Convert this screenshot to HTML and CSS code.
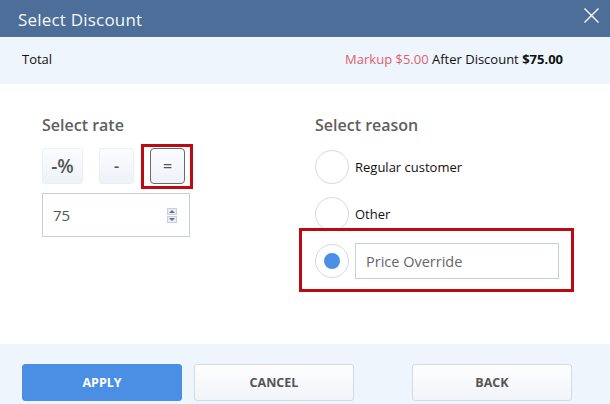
FILE: index.html
```html
<!DOCTYPE html>
<html lang="en">
  <head>
    <meta charset="UTF-8" />
    <meta name="viewport" content="width=device-width, initial-scale=1.0" />
    <title>Select Discount</title>
    <link rel="stylesheet" href="styles.css">
  </head>
  <body>
    <div class="dialog">
      <div class="header">
        <h1>Select Discount</h1>
        <svg class="close" width="15" height="15" viewBox="0 0 15 15">
          <path d="M0.5 0.5 L14.5 14.5 M14.5 0.5 L0.5 14.5" stroke="#fff" stroke-width="1.4" fill="none" />
        </svg>
      </div>
      <div class="summary">
        <span>Total</span>
        <span><span class="markup">Markup $5.00</span> After Discount <b>$75.00</b></span>
      </div>
      <div class="content">
        <div class="rate">
          <h2>Select rate</h2>
          <div class="modes">
            <button class="mode wide">-%</button>
            <button class="mode">-</button>
            <span class="mark"><button class="mode active">=</button></span>
          </div>
          <div class="number">
            <span>75</span>
            <span class="spin">
              <span class="up"></span>
              <span class="down"></span>
            </span>
          </div>
        </div>
        <div class="reason">
          <h2>Select reason</h2>
          <div class="option"><span class="radio"></span><span>Regular customer</span></div>
          <div class="option"><span class="radio"></span><span>Other</span></div>
          <div class="option picked">
            <span class="radio on"></span>
            <div class="field">Price Override</div>
          </div>
        </div>
      </div>
      <div class="footer">
        <button class="btn primary">Apply</button>
        <button class="btn">Cancel</button>
        <button class="btn back">Back</button>
      </div>
    </div>
  </body>
</html>
```

FILE: styles.css
```css
* {
  margin: 0;
  padding: 0;
  box-sizing: border-box;
}
body {
  font-family: "Open Sans", "DejaVu Sans", sans-serif;
  width: 610px;
  height: 404px;
  overflow: hidden;
  background: #fff;
}
.header {
  height: 37px;
  background: #4c6e98;
  display: flex;
  align-items: center;
  justify-content: space-between;
  padding: 0 11px 0 18px;

  h1 {
    color: #f4f8fc;
    font-size: 17px;
    font-weight: 400;
    letter-spacing: 0.2px;
    margin-top: 2px;
  }
  .close {
    margin-top: -6px;
  }
}
.summary {
  height: 47px;
  background: #eef5fd;
  display: flex;
  align-items: center;
  justify-content: space-between;
  padding: 0 47px 4px 22px;
  font-size: 13px;
  color: #111;

  .markup {
    color: #e0606a;
  }
}
.content {
  height: 260px;
  display: flex;
  padding: 30px 0 0 42px;

  h2 {
    font-size: 16px;
    font-weight: 600;
    color: #5f5f5f;
    line-height: 22px;
    margin-bottom: 12px;
  }
}
.rate {
  width: 273px;
}
.modes {
  display: flex;
  gap: 16px;
  height: 36px;
}
.mode {
  width: 35px;
  height: 36px;
  border: 1px solid #eaeef5;
  border-radius: 3px;
  background: linear-gradient(#fbfcfe, #eef2f9);
  font-family: inherit;
  font-size: 16px;
  font-weight: 600;
  color: #555;
}
.mode.wide {
  width: 41px;
  font-size: 19px;
}
.mode.active {
  border-color: #6a6a6a;
  border-radius: 4px;
}
.mark {
  position: relative;
  display: block;
}
.mark::after {
  content: "";
  position: absolute;
  top: -4px;
  left: -9px;
  right: -8px;
  bottom: -5px;
  border: 3px solid #bb0a12;
}
.number {
  margin-top: 9px;
  width: 148px;
  height: 44px;
  border: 1px solid #c6cfdb;
  display: flex;
  align-items: center;
  justify-content: space-between;
  padding: 0 12px 0 10px;
  font-size: 15px;
  color: #555;
}
.spin {
  display: flex;
  flex-direction: column;
  gap: 1px;
  width: 10px;

  span {
    height: 7px;
    border: 1px solid #c9ced8;
    background: #e9ecf2;
    position: relative;
  }
  span::after {
    content: "";
    position: absolute;
    left: 1px;
    border-left: 3px solid transparent;
    border-right: 3px solid transparent;
  }
  .up::after {
    top: 1px;
    border-bottom: 3px solid #5b6fa8;
  }
  .down::after {
    top: 1px;
    border-top: 3px solid #5b6fa8;
  }
}
.reason {
  width: 260px;

  h2 {
    margin-bottom: 14px;
  }
}
.option {
  display: flex;
  align-items: center;
  gap: 6px;
  height: 34px;
  margin-bottom: 13px;
  font-size: 13px;
  color: #111;
}
.radio {
  width: 34px;
  height: 34px;
  border: 1px solid #d3d9e4;
  border-radius: 50%;
  background: #fff;
  display: flex;
  align-items: center;
  justify-content: center;
}
.radio.on::after {
  content: "";
  width: 16px;
  height: 16px;
  border-radius: 50%;
  background: #4a8fe3;
}
.option.picked {
  position: relative;
}
.option.picked::after {
  content: "";
  position: absolute;
  top: -16px;
  left: -16px;
  width: 269px;
  height: 58px;
  border: 3px solid #bb0a12;
}
.field {
  width: 204px;
  height: 36px;
  border: 1px solid #c6cfdb;
  display: flex;
  align-items: center;
  padding-left: 10px;
  font-size: 14.5px;
  color: #666;
}
.footer {
  height: 60px;
  background: #eef5fd;
  display: flex;
  gap: 12px;
  padding: 20px 0 0 22px;
}
.btn {
  width: 160px;
  height: 37px;
  border: 1px solid #d3dbe6;
  border-radius: 3px;
  background: linear-gradient(#fefefe, #f1f4f9);
  font-family: inherit;
  font-size: 12.5px;
  font-weight: 700;
  text-transform: uppercase;
  color: #555;
}
.btn.primary {
  background: #4a8fe3;
  border-color: #4a8fe3;
  color: #fff;
}
.btn.back {
  margin-left: 46px;
}
```
